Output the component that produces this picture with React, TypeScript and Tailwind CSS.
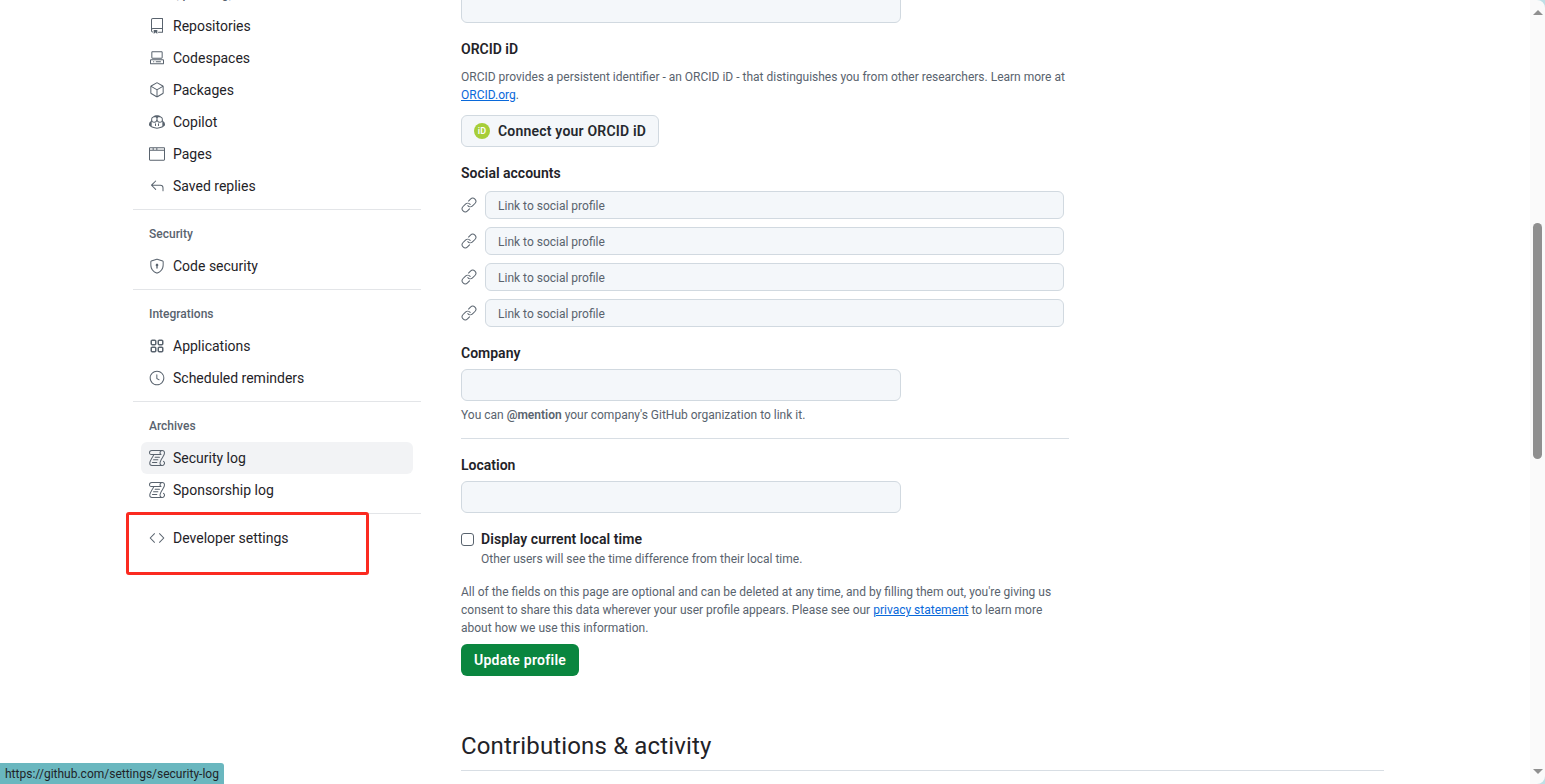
import { GoRepo, GoCodespaces, GoPackage, GoCopilot, GoBrowser, GoReply, GoShieldLock, GoClock, GoLog, GoCode, GoLink } from 'react-icons/go';
import type { ReactNode } from 'react';

const FONT = "font-['Roboto',sans-serif]";

function AppsIcon() {
  return (
    <svg width="16" height="16" viewBox="0 0 16 16" fill="currentColor">
      <path fillRule="evenodd" d="M1.5 3.25c0-.966.784-1.75 1.75-1.75h2.5c.966 0 1.75.784 1.75 1.75v2.5A1.75 1.75 0 0 1 5.75 7.5h-2.5A1.75 1.75 0 0 1 1.5 5.75Zm7 0c0-.966.784-1.75 1.75-1.75h2.5c.966 0 1.75.784 1.75 1.75v2.5a1.75 1.75 0 0 1-1.75 1.75h-2.5A1.75 1.75 0 0 1 8.5 5.75Zm-7 7c0-.966.784-1.75 1.75-1.75h2.5c.966 0 1.75.784 1.75 1.75v2.5a1.75 1.75 0 0 1-1.75 1.75h-2.5a1.75 1.75 0 0 1-1.75-1.75Zm7 0c0-.966.784-1.75 1.75-1.75h2.5c.966 0 1.75.784 1.75 1.75v2.5a1.75 1.75 0 0 1-1.75 1.75h-2.5a1.75 1.75 0 0 1-1.75-1.75ZM3.25 3a.25.25 0 0 0-.25.25v2.5c0 .138.112.25.25.25h2.5A.25.25 0 0 0 6 5.75v-2.5A.25.25 0 0 0 5.75 3Zm7 0a.25.25 0 0 0-.25.25v2.5c0 .138.112.25.25.25h2.5a.25.25 0 0 0 .25-.25v-2.5a.25.25 0 0 0-.25-.25ZM3 10.25v2.5c0 .138.112.25.25.25h2.5a.25.25 0 0 0 .25-.25v-2.5a.25.25 0 0 0-.25-.25h-2.5a.25.25 0 0 0-.25.25Zm7 0v2.5c0 .138.112.25.25.25h2.5a.25.25 0 0 0 .25-.25v-2.5a.25.25 0 0 0-.25-.25h-2.5a.25.25 0 0 0-.25.25Z" />
    </svg>
  );
}

function NavItem({ icon, label, active }: { icon: ReactNode; label: string; active?: boolean }) {
  return (
    <div className={`h-8 mx-2 px-2 rounded-md flex items-center gap-2 text-sm text-[#1f2328] ${active ? 'bg-[#f2f3f5]' : ''}`}>
      <span className="w-4 h-4 flex items-center justify-center text-[#59636e]">{icon}</span>
      <span>{label}</span>
    </div>
  );
}

function NavHeading({ label }: { label: string }) {
  return <div className="h-8 px-4 flex items-center text-xs font-medium text-[#59636e]">{label}</div>;
}

function Divider() {
  return <div className="h-px bg-[#e3e5e8] mt-[7px] mb-[8px]" />;
}

function SocialRow() {
  return (
    <div className="flex items-center h-[28px] mb-2">
      <GoLink size={16} className="text-[#59636e] mr-2" />
      <div className="w-[579px] h-[28px] px-3 pt-px flex items-center rounded-md border border-[#d1d9e0] bg-[#f4f7fa] text-xs text-[#59636e]">
        Link to social profile
      </div>
    </div>
  );
}

function TextBox() {
  return <div className="w-[440px] h-8 rounded-md border border-[#d1d9e0] bg-[#f4f7fa]" />;
}

export default function App() {
  return (
    <div className={`relative h-[784px] overflow-hidden bg-white ${FONT}`}>
      <div className="flex h-full">
        <div className="flex-1 min-w-0 flex pl-[133px] overflow-hidden">
          {/* sidebar */}
          <aside className="w-[288px] shrink-0 -mt-[22px]">
            <div className="h-8 px-4 flex items-center text-xs font-medium text-[#59636e]">Code, planning, and automation</div>
            <NavItem icon={<GoRepo size={16} />} label="Repositories" />
            <NavItem icon={<GoCodespaces size={16} />} label="Codespaces" />
            <NavItem icon={<GoPackage size={16} />} label="Packages" />
            <NavItem icon={<GoCopilot size={16} />} label="Copilot" />
            <NavItem icon={<GoBrowser size={16} />} label="Pages" />
            <NavItem icon={<GoReply size={16} />} label="Saved replies" />
            <Divider />
            <NavHeading label="Security" />
            <NavItem icon={<GoShieldLock size={16} />} label="Code security" />
            <Divider />
            <NavHeading label="Integrations" />
            <NavItem icon={<AppsIcon />} label="Applications" />
            <NavItem icon={<GoClock size={16} />} label="Scheduled reminders" />
            <Divider />
            <NavHeading label="Archives" />
            <NavItem icon={<GoLog size={16} />} label="Security log" active />
            <NavItem icon={<GoLog size={16} />} label="Sponsorship log" />
            <Divider />
            <NavItem icon={<GoCode size={16} />} label="Developer settings" />
          </aside>

          {/* main column */}
          <main className="ml-[40px] w-[923px] shrink-0 -mt-[9px]">
            <TextBox />
            <div className="w-[608px]">
              <h3 className="mt-[16px] text-sm font-semibold leading-5 text-[#1f2328]">ORCID iD</h3>
              <p className="mt-[9px] text-xs leading-[18px] text-[#59636e]">
                ORCID provides a persistent identifier - an ORCID iD - that distinguishes you from other researchers. Learn more at{' '}
                <span className="text-[#0969da] underline">ORCID.org</span>.
              </p>
              <div className="mt-[11px] w-[198px] h-8 flex items-center gap-2 pl-3 rounded-md border border-[#d1d9e0] bg-[#f4f7fa] text-sm font-semibold tracking-[0.2px] text-[#25292e]">
                <span className="w-4 h-4 rounded-full bg-[#a6ce39] flex items-center justify-center text-[9px] leading-none text-white">iD</span>
                Connect your ORCID iD
              </div>
              <h3 className="mt-[16px] mb-[8px] text-sm font-semibold leading-5 text-[#1f2328]">Social accounts</h3>
              <SocialRow />
              <SocialRow />
              <SocialRow />
              <SocialRow />
              <h3 className="mt-[16px] mb-[6px] text-sm font-semibold leading-5 text-[#1f2328]">Company</h3>
              <TextBox />
              <p className="mt-[4px] text-xs leading-5 text-[#59636e]">
                You can <span className="font-semibold">@mention</span> your company's GitHub organization to link it.
              </p>
              <div className="h-px bg-[#d8dee4] mt-[13px]" />
              <h3 className="mt-[16px] mb-[6px] text-sm font-semibold leading-5 text-[#1f2328]">Location</h3>
              <TextBox />
              <div className="mt-[16px] flex items-center gap-[7px] h-5">
                <span className="w-[13px] h-[13px] rounded-[3px] border border-[#59636e] bg-white" />
                <span className="text-sm font-semibold tracking-[0.06px] text-[#1f2328]">Display current local time</span>
              </div>
              <p className="ml-[20px] text-xs leading-5 text-[#59636e]">Other users will see the time difference from their local time.</p>
              <p className="mt-[14px] text-xs leading-[18px] text-[#59636e]">
                All of the fields on this page are optional and can be deleted at any time, and by filling them out, you're giving us consent to share this data wherever your user profile appears. Please see our{' '}
                <span className="text-[#0969da] underline">privacy statement</span> to learn more about how we use this information.
              </p>
              <div className="mt-[7px] w-[118px] h-8 flex items-center justify-center rounded-md bg-[#0a863f] text-sm font-semibold tracking-[0.25px] text-white">Update profile</div>
            </div>
            <h2 className="mt-[52px] text-2xl leading-[36px] tracking-[0.15px] text-[#1f2328] pb-[6px] border-b border-[#d8dee4]">Contributions &amp; activity</h2>
          </main>
        </div>

        {/* browser scrollbar */}
        <div className="w-[15px] shrink-0 bg-[#fafafa] flex flex-col items-center justify-between py-[10px]">
          <div className="w-0 h-0 border-x-[5px] border-x-transparent border-b-[5px] border-b-[#8f8f8f]" />
          <div className="w-0 h-0 border-x-[5px] border-x-transparent border-t-[5px] border-t-[#8f8f8f]" />
        </div>
      </div>

      {/* scrollbar thumb */}
      <div className="absolute left-[1533px] top-[223px] w-[9px] h-[236px] rounded-full bg-[#8f8f8f]" />

      {/* window corners */}
      <svg className="absolute right-0 top-0" width="8" height="8" viewBox="0 0 8 8">
        <path d="M0 0H8V8A8 8 0 0 0 0 0Z" fill="#bfe0e6" />
      </svg>
      <svg className="absolute right-0 bottom-0" width="8" height="8" viewBox="0 0 8 8">
        <path d="M0 8H8V0A8 8 0 0 1 0 8Z" fill="#bfe0e6" />
      </svg>

      {/* link preview status bubble */}
      <div className="absolute left-0 bottom-0 h-[21px] w-[224px] rounded-tr-[3px] bg-[#6ab7bf] pl-[5px] flex items-center whitespace-nowrap text-xs text-[#1f2328]">
        https://github.com/settings/security-log
      </div>

      {/* annotation box */}
      <div className="absolute left-[126px] top-[512px] w-[243px] h-[63px] rounded-[3px] border-[3px] border-[#fb2a20]" />
    </div>
  );
}
